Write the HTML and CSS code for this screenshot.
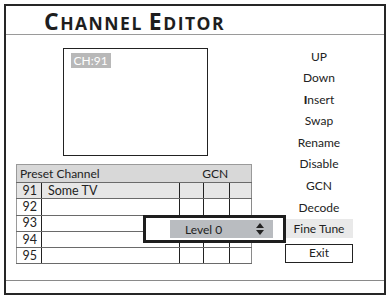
FILE: index.html
```html
<!DOCTYPE html>
<html>
<head>
<meta charset="utf-8">
<link rel="stylesheet" href="styles.css">
</head>
<body>
<div class="frame">
  <div class="title"><span class="cap">C</span>hannel <span class="cap">E</span>ditor</div>
  <div class="main">
    <div class="left">
      <div class="video"><span class="chlabel">CH:91</span></div>
      <table class="chtable">
        <tr class="head">
          <td colspan="2" class="h-preset">Preset Channel</td>
          <td colspan="3" class="h-gcn">GCN</td>
        </tr>
        <tr class="sel">
          <td class="num">91</td><td class="name">Some TV</td><td class="g1"></td><td class="g2"></td><td class="g3"></td>
        </tr>
        <tr>
          <td class="num">92</td><td class="name"></td><td class="g1"></td><td class="g2"></td><td class="g3"></td>
        </tr>
        <tr>
          <td class="num">93</td><td class="name"></td><td class="g1"></td><td class="g2"></td><td class="g3"></td>
        </tr>
        <tr>
          <td class="num">94</td><td class="name"></td><td class="g1"></td><td class="g2"></td><td class="g3"></td>
        </tr>
        <tr>
          <td class="num">95</td><td class="name"></td><td class="g1"></td><td class="g2"></td><td class="g3"></td>
        </tr>
      </table>
    </div>
    <div class="menu">
      <div class="item">UP</div>
      <div class="item">Down</div>
      <div class="item"><b class="bi">I</b>nsert</div>
      <div class="item">Swap</div>
      <div class="item">Rename</div>
      <div class="item">Disable</div>
      <div class="item">GCN</div>
      <div class="item">Decode</div>
      <div class="item active">Fine Tune</div>
      <div class="item exit">Exit</div>
    </div>
  </div>
  <div class="footer"></div>
  <div class="popup">
    <div class="select">
      <span class="level">Level 0</span>
      <svg class="arrows" width="8" height="12" viewBox="0 0 8 12">
        <polygon points="4,0 8,5 0,5" fill="#222"/>
        <polygon points="0,7 8,7 4,12" fill="#222"/>
      </svg>
    </div>
  </div>
</div>
</body>
</html>
```

FILE: styles.css
```css
html, body {
  margin: 0;
  padding: 0;
  background: #fff;
}
body {
  width: 390px;
  height: 296px;
  overflow: hidden;
  font-family: "Lato", "Open Sans", sans-serif;
  color: #222;
}
.frame {
  position: relative;
  margin: 4px 4px 0 4px;
  width: 382px;
  height: 291px;
  box-sizing: border-box;
  border: 2px solid #262626;
  display: flex;
  flex-direction: column;
}
.title {
  height: 29px;
  box-sizing: border-box;
  border-bottom: 1px solid #9a9a9a;
  padding-left: 38px;
  font-family: "Open Sans", sans-serif;
  font-size: 17.5px;
  font-weight: 700;
  text-transform: uppercase;
  letter-spacing: 1.5px;
  line-height: 31px;
  color: #1e1e1e;
}
.title .cap {
  font-size: 23px;
}
.main {
  flex: 1;
  display: flex;
}
.left {
  width: 275px;
  padding-left: 10px;
  box-sizing: border-box;
}
.video {
  margin: 13px 0 0 47px;
  width: 145px;
  height: 108px;
  box-sizing: border-box;
  border: 1.5px solid #222;
  padding: 4px 0 0 6.5px;
}
.chlabel {
  display: block;
  width: fit-content;
  background: #b8b8b8;
  color: #fff;
  font-size: 12px;
  line-height: 15px;
  padding: 0 3px;
}
.chtable {
  margin-top: 8px;
  border-collapse: collapse;
  font-size: 12px;
  line-height: 14px;
}
.chtable td {
  padding: 0;
  border-top: 1px solid #6a6a6a;
  border-bottom: 1px solid #6a6a6a;
  height: 16.3px;
  box-sizing: border-box;
}
.chtable tr.head td {
  height: 18px;
  background: #d8d8d8;
  border-top: 1px solid #9a9a9a;
}
.chtable tr.sel td {
  background: #e6e6e6;
}
.h-preset {
  padding-left: 3px !important;
  border-left: 1px solid #9a9a9a;
  width: 160px;
}
.h-gcn {
  text-align: center;
  border-right: 1px solid #9a9a9a;
}
.num {
  width: 25px;
  text-align: right;
  padding-right: 4px !important;
  border-left: 1px solid #9a9a9a;
  border-right: 1px solid #222;
  font-size: 12.5px;
}
.name {
  width: 138px;
  padding-left: 6px !important;
  border-right: 1px solid #222;
  font-size: 12.5px;
}
.g1 { width: 24px; border-right: 1px solid #222; }
.g2 { width: 26px; border-right: 1px solid #222; }
.g3 { width: 22px; border-right: 1px solid #8a8a8a; }
.menu {
  width: 68px;
  margin-top: 11.5px;
  display: flex;
  flex-direction: column;
  margin-left: 4px;
}
.item {
  height: 19px;
  margin-bottom: 2.6px;
  font-size: 12px;
  line-height: 19px;
  text-align: center;
  color: #222;
}
.bi {
  font-weight: 900;
}
.item.active {
  background: #e9e9e9;
  margin-bottom: 5.7px;
}
.item.exit {
  height: 19.5px;
  border: 1.5px solid #222;
  box-sizing: border-box;
  line-height: 16.5px;
}
.footer {
  height: 12px;
  border-top: 1px solid #8a8a8a;
}
.popup {
  position: absolute;
  left: 137px;
  top: 209px;
  width: 143px;
  height: 28px;
  box-sizing: border-box;
  border: 3px solid #1e1e1e;
  background: #fff;
  padding-left: 24px;
  display: flex;
  align-items: center;
}
.select {
  flex: none;
  width: 103px;
  height: 18px;
  background: #b9bcc0;
  display: flex;
  align-items: center;
  position: relative;
}
.level {
  font-size: 12px;
  margin-left: 15px;
  color: #222;
}
.arrows {
  position: absolute;
  left: 86px;
  top: 3px;
}
```
